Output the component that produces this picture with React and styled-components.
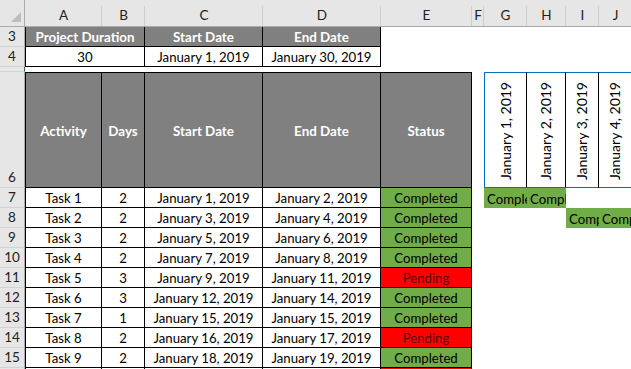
import React from 'react'
import styled, { createGlobalStyle, css } from 'styled-components'

const GlobalStyle = createGlobalStyle`
    html, body {
        margin: 0;
        padding: 0;
        background: #fff;
    }
    body {
        font-family: Lato, "Open Sans", sans-serif;
        font-size: 13.2px;
        color: #000;
    }
`

// column tracks: row numbers, then A..J
const COLS = ['A', 'B', 'C', 'D', 'E', 'F', 'G', 'H', 'I', 'J']

const tasks = [
    ['Task 1', 2, 'January 1, 2019', 'January 2, 2019', 'Completed'],
    ['Task 2', 2, 'January 3, 2019', 'January 4, 2019', 'Completed'],
    ['Task 3', 2, 'January 5, 2019', 'January 6, 2019', 'Completed'],
    ['Task 4', 2, 'January 7, 2019', 'January 8, 2019', 'Completed'],
    ['Task 5', 3, 'January 9, 2019', 'January 11, 2019', 'Pending'],
    ['Task 6', 3, 'January 12, 2019', 'January 14, 2019', 'Completed'],
    ['Task 7', 1, 'January 15, 2019', 'January 15, 2019', 'Completed'],
    ['Task 8', 2, 'January 16, 2019', 'January 17, 2019', 'Pending'],
    ['Task 9', 2, 'January 18, 2019', 'January 19, 2019', 'Completed'],
    ['Task 10', 3, 'January 20, 2019', 'January 22, 2019', 'Pending'],
]

const days = ['January 1, 2019', 'January 2, 2019', 'January 3, 2019', 'January 4, 2019']

// bars on the timeline: sheet row, first column (G = 7), span
const bars = [
    { row: 7, col: 7, span: 2 },
    { row: 8, col: 9, span: 2 },
]

const Sheet = styled.div`
    display: grid;
    grid-template-columns: 25px 77px 43px 118px 118px 91px 12px 43px 39px 33px 33px;
    grid-template-rows: 27px 20px 20px 5px 116px repeat(10, 20px);
    width: 631px;
    height: 369px;
    overflow: hidden;
`

const place = css`
    grid-column: ${p => p.$col} / span ${p => p.$span || 1};
    grid-row: ${p => p.$row};
`

const Corner = styled.div`
    grid-column: 1;
    grid-row: 1;
    background: #e6e6e6;
    border-right: 1px solid #ababab;
    border-bottom: 1px solid #ababab;
    box-sizing: border-box;
    svg {
        display: block;
    }
`

const ColHead = styled.div`
    ${place}
    background: #e6e6e6 linear-gradient(#cdcdcd, #cdcdcd) right 6px / 1px calc(100% - 6px) no-repeat;
    border-bottom: 1px solid #ababab;
    box-sizing: border-box;
    display: flex;
    justify-content: center;
    align-items: center;
    padding-top: 4px;
    color: #222;
    font-size: 13.5px;
    overflow: hidden;
`

const RowHead = styled.div`
    ${place}
    background: #e6e6e6;
    border-right: 1px solid ${p => (p.$active ? '#217346' : '#ababab')};
    border-bottom: 1px solid #d2d2d2;
    box-sizing: border-box;
    display: flex;
    justify-content: center;
    align-items: flex-end;
    padding-bottom: 1px;
    line-height: 18px;
    font-size: 13.5px;
    color: #222;
    overflow: hidden;
`

const Cell = styled.div`
    ${place}
    box-sizing: border-box;
    border-right: 1px solid #000;
    border-bottom: 1px solid #000;
    ${p => p.$left && 'border-left: 1px solid #000;'}
    ${p => p.$top && 'border-top: 1px solid #000;'}
    background: #fff;
    display: flex;
    justify-content: center;
    align-items: center;
    padding-top: 1px;
    white-space: nowrap;
    overflow: hidden;
    line-height: 18px;
`

const TitleCell = styled(Cell)`
    background: #808080;
    color: #fff;
    font-weight: bold;
    font-size: 13.4px;
`

const StatusCell = styled(Cell)`
    background: ${p => (p.$pending ? '#ff0000' : '#70ad47')};
    color: ${p => (p.$pending ? '#5c0000' : '#000')};
`

const DayHead = styled.div`
    ${place}
    box-sizing: border-box;
    border-top: 1px solid #0070c0;
    border-bottom: 1px solid #0070c0;
    border-right: 1px solid #000;
    ${p => p.$first && 'border-left: 1px solid #0070c0;'}
    display: flex;
    justify-content: center;
    align-items: center;
    padding-top: 2px;
    overflow: hidden;
    span {
        writing-mode: vertical-rl;
        transform: rotate(180deg);
        white-space: nowrap;
        font-size: 14px;
        line-height: 18px;
    }
`

const BarCell = styled.div`
    ${place}
    background: #70ad47;
    display: flex;
    align-items: center;
    padding-top: 1px;
    overflow: hidden;
    white-space: nowrap;
    line-height: 18px;
`

const BarText = styled.span`
    flex: 0 0 auto;
    box-sizing: border-box;
    width: 100%;
    overflow: hidden;
    padding-left: 3px;
`

function App() {
    const rowNumbers = [3, 4, 5, 6, 7, 8, 9, 10, 11, 12, 13, 14, 15, 16]

    return (
        <>
            <GlobalStyle />
            <Sheet>
                <Corner>
                    <svg width="25" height="27" viewBox="0 0 25 27">
                        <polygon points="11,22 21,22 21,12" fill="#bdbdbd" />
                    </svg>
                </Corner>
                {COLS.map((c, i) => (
                    <ColHead key={c} $col={i + 2} $row={1}>{c}</ColHead>
                ))}

                {rowNumbers.map((n, i) => (
                    <RowHead key={n} $col={1} $row={i + 2} $active={n === 5}>
                        {n === 5 ? '' : n}
                    </RowHead>
                ))}

                {/* summary block */}
                <TitleCell $col={2} $span={2} $row={2} $left>Project Duration</TitleCell>
                <TitleCell $col={4} $row={2}>Start Date</TitleCell>
                <TitleCell $col={5} $row={2}>End Date</TitleCell>
                <Cell $col={2} $span={2} $row={3} $left>30</Cell>
                <Cell $col={4} $row={3}>January 1, 2019</Cell>
                <Cell $col={5} $row={3}>January 30, 2019</Cell>

                {/* task table */}
                <TitleCell $col={2} $row={5} $left $top>Activity</TitleCell>
                <TitleCell $col={3} $row={5} $top>Days</TitleCell>
                <TitleCell $col={4} $row={5} $top>Start Date</TitleCell>
                <TitleCell $col={5} $row={5} $top>End Date</TitleCell>
                <TitleCell $col={6} $row={5} $top>Status</TitleCell>

                {tasks.map((t, i) => (
                    <React.Fragment key={t[0]}>
                        <Cell $col={2} $row={i + 6} $left>{t[0]}</Cell>
                        <Cell $col={3} $row={i + 6}>{t[1]}</Cell>
                        <Cell $col={4} $row={i + 6}>{t[2]}</Cell>
                        <Cell $col={5} $row={i + 6}>{t[3]}</Cell>
                        <StatusCell $col={6} $row={i + 6} $pending={t[4] === 'Pending'}>{t[4]}</StatusCell>
                    </React.Fragment>
                ))}

                {/* timeline */}
                {days.map((d, i) => (
                    <DayHead key={d} $col={i + 8} $row={5} $first={i === 0}>
                        <span>{d}</span>
                    </DayHead>
                ))}
                {bars.map(b =>
                    Array.from({ length: b.span }, (_, k) => (
                        <BarCell key={`${b.row}-${k}`} $col={b.col + k + 1} $row={b.row - 1}>
                            <BarText>Completed</BarText>
                        </BarCell>
                    ))
                )}
            </Sheet>
        </>
    )
}

export default App
